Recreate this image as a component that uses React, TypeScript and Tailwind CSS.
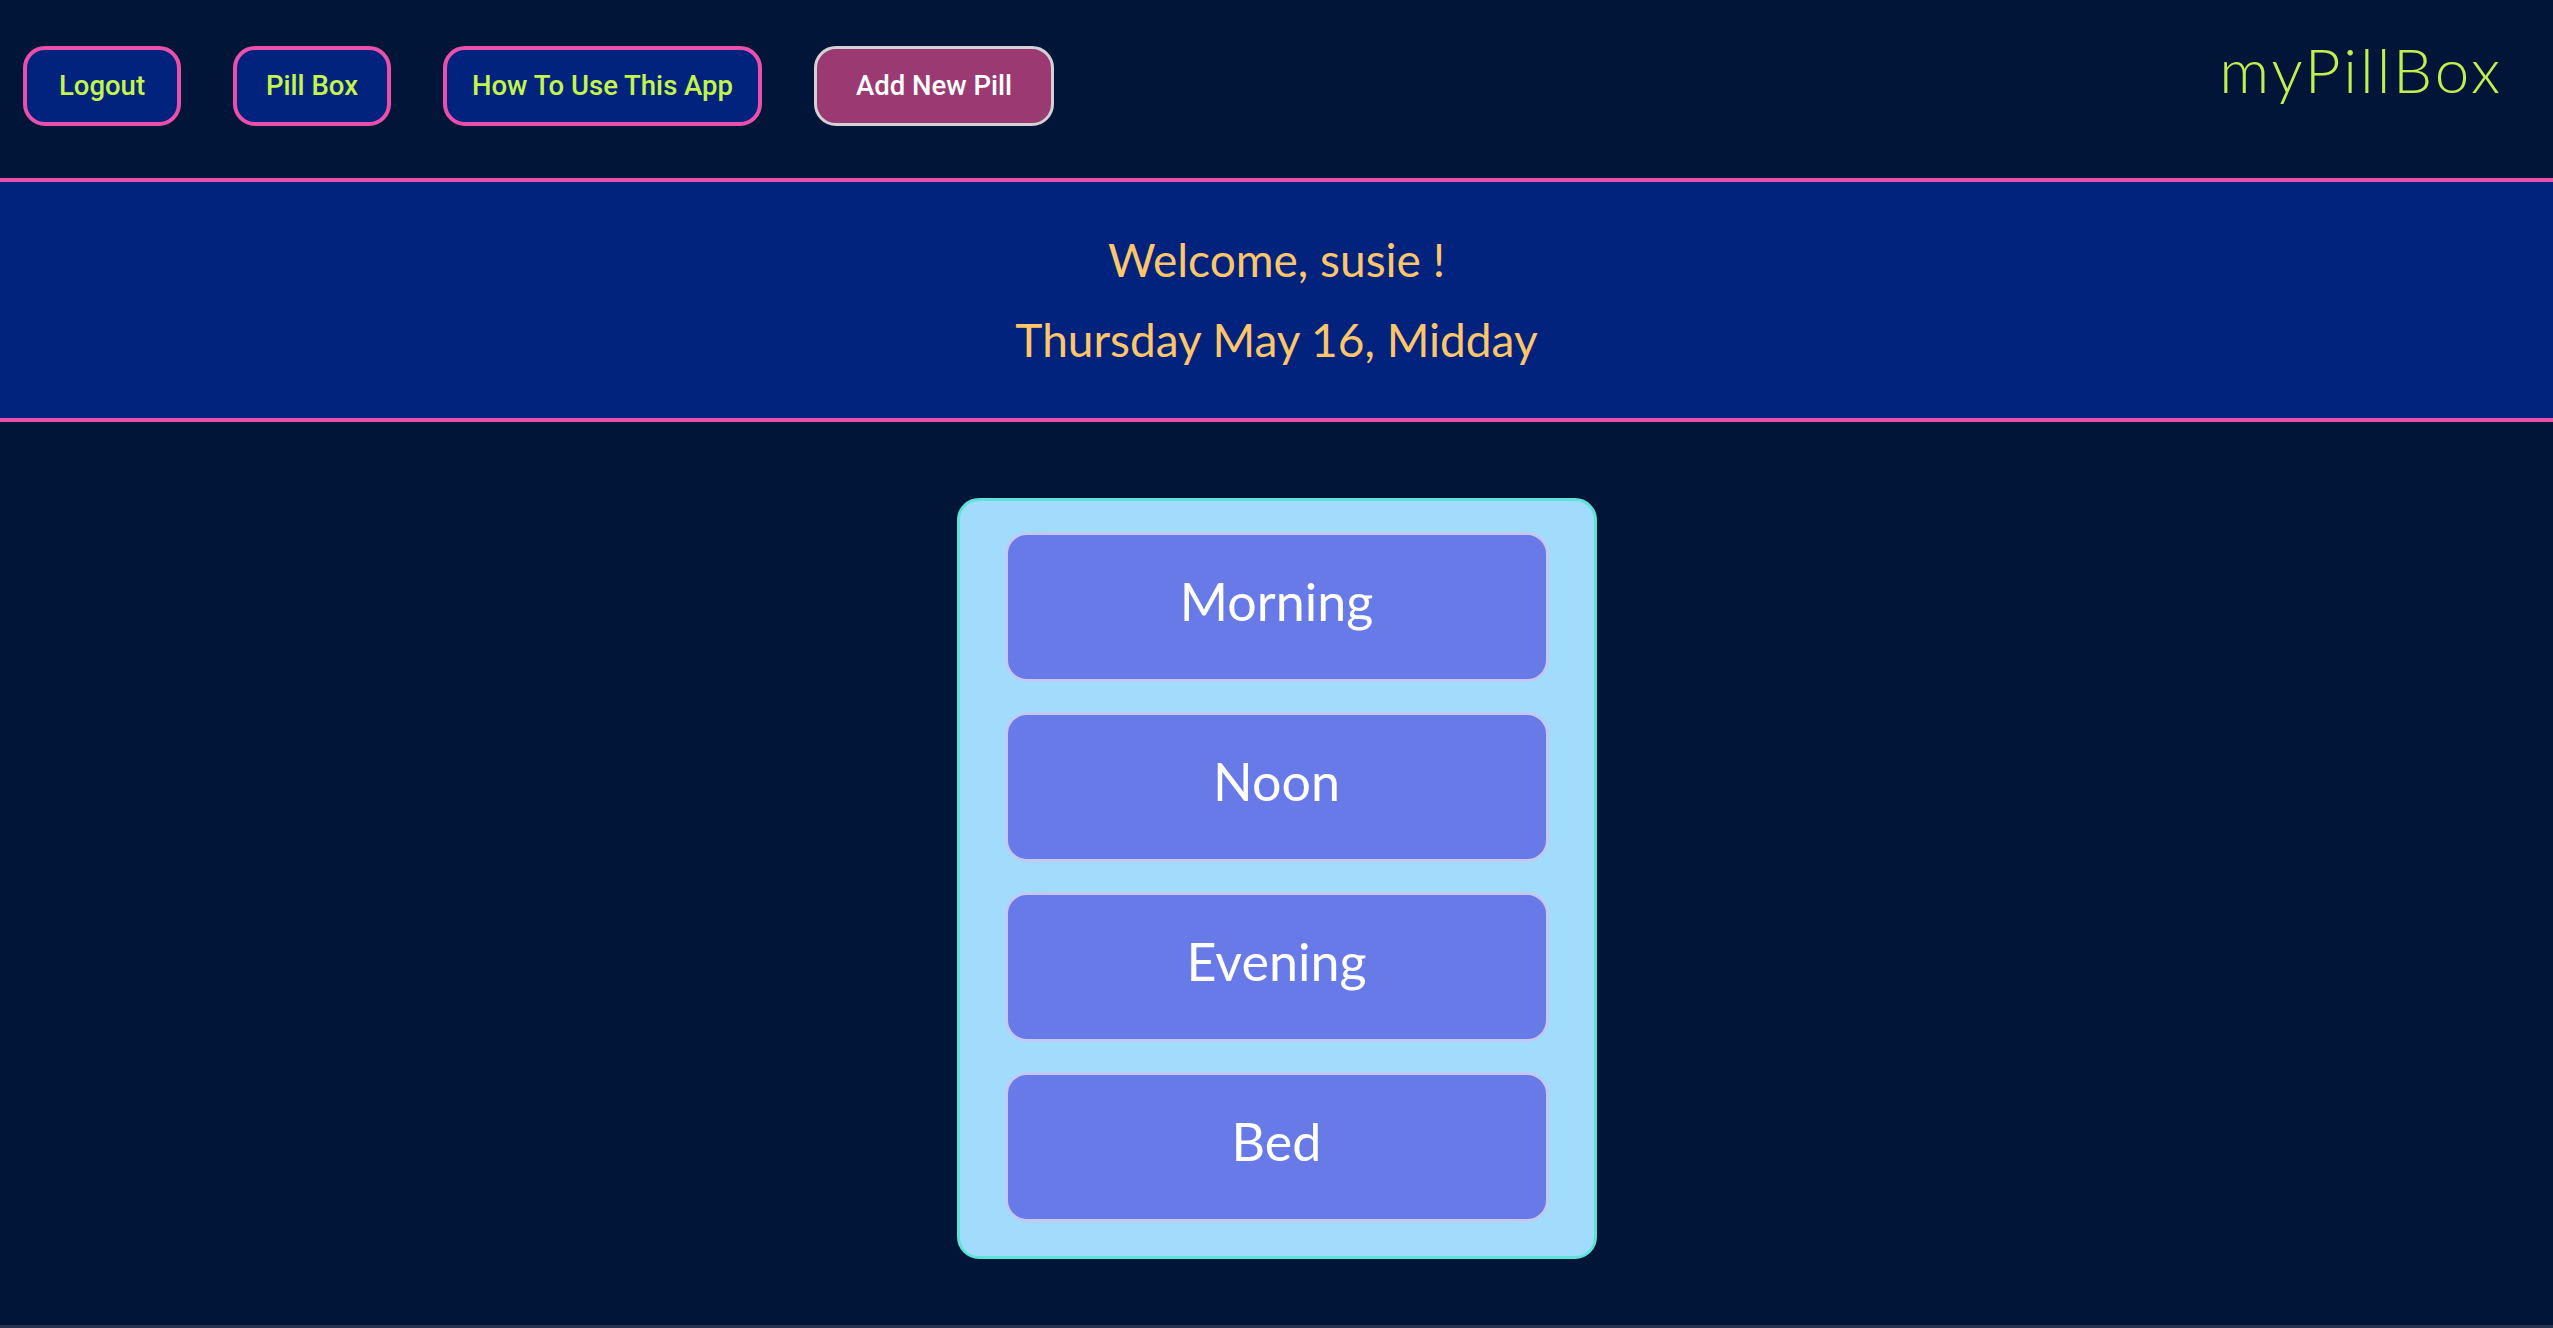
import React from "react";

const NAV_LINKS = [
  { label: "Logout", w: "w-[158px]" },
  { label: "Pill Box", w: "w-[158px]" },
  { label: "How To Use This App", w: "w-[319px]" },
];
const TIMES = ["Morning", "Noon", "Evening", "Bed"];

const round = { fontFamily: "Lato, 'Noto Sans', sans-serif" };
const grot = { fontFamily: "Roboto, 'Liberation Sans', sans-serif" };

function Header() {
  return (
    <header className="h-[182px] border-b-4 border-[#e94fab] flex justify-between items-start pl-[23px] pr-[50px]">
      <nav className="flex gap-[52px] pt-[46px]" style={grot}>
        {NAV_LINKS.map(({ label, w }) => (
          <button
            key={label}
            className={`${w} h-[80px] rounded-[22px] border-4 border-[#e94fab] bg-[#02237d] text-[#c3f54c] text-[27.5px] font-medium`}
          >
            {label}
          </button>
        ))}
        <button className="w-[240px] h-[80px] rounded-[22px] border-[3px] border-[#d2d2d6] bg-[#9b3a72] text-white text-[27.5px] font-medium">
          Add New Pill
        </button>
      </nav>
      <div className="pt-[38px] text-[62px] font-light text-[#bff04f] leading-none tracking-[3px]" style={round}>
        myPillBox
      </div>
    </header>
  );
}

function Banner({ name, when }: { name: string; when: string }) {
  return (
    <section
      className="h-[240px] bg-[#02237d] border-b-4 border-[#e94fab] flex flex-col items-center justify-center text-[#fec66a] text-[46px] leading-[80px]"
      style={round}
    >
      <p>Welcome, {name} !</p>
      <p>{when}</p>
    </section>
  );
}

function PillBox() {
  return (
    <div className="w-[640px] rounded-[22px] border-[3px] border-[#5fe3d6] bg-[#a1dcfc] px-[45px] pt-[31px] pb-[34px] flex flex-col gap-[30px]">
      {TIMES.map((t) => (
        <button
          key={t}
          className="w-full h-[150px] pb-[12px] rounded-[22px] border-[3px] border-[#c3c9f4] bg-[#6879e8] text-white text-[52px]"
          style={round}
        >
          {t}
        </button>
      ))}
    </div>
  );
}

export default function App() {
  return (
    <div className="h-[1328px] bg-[#001537] flex flex-col overflow-hidden">
      <Header />
      <Banner name="susie" when="Thursday May 16, Midday" />
      <main className="flex-1 flex justify-center items-start pt-[76px]">
        <PillBox />
      </main>
      <div className="h-[3px] bg-[#28334f]" />
    </div>
  );
}
